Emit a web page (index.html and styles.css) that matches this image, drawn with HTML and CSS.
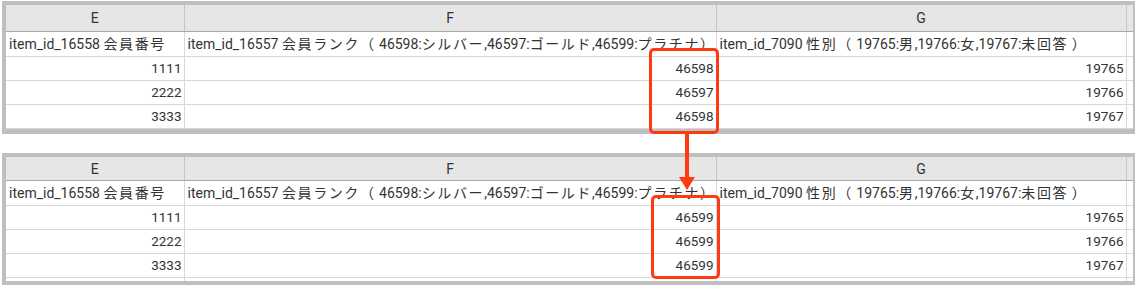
FILE: index.html
```html
<!DOCTYPE html>
<html lang="ja">
<head>
  <meta charset="UTF-8" />
  <title>会員ランク 一括更新</title>
  <link rel="stylesheet" href="styles.css">
</head>
<body>

  <div class="page">
    <!-- before -->
    <div class="sheet sheet-before">
      <table class="grid">
        <colgroup>
          <col class="col-e"><col class="col-f"><col class="col-g"><col>
        </colgroup>
        <thead>
          <tr><th>E</th><th>F</th><th>G</th><th class="edge"></th></tr>
        </thead>
        <tbody>
          <tr class="label-row">
            <td>item_id_16558 <span class="ja">会員番号</span></td>
            <td>item_id_16557 <span class="ja">会員ランク（</span> 46598:<span class="ja">シルバー</span>,46597:<span class="ja">ゴールド</span>,46599:<span class="ja">プラチナ）</span></td>
            <td>item_id_7090 <span class="ja">性別（</span> 19765:<span class="ja">男</span>,19766:<span class="ja">女</span>,19767:<span class="ja">未回答</span> <span class="ja">）</span></td>
            <td></td>
          </tr>
          <tr><td class="num">1111</td><td class="num">46598</td><td class="num">19765</td><td></td></tr>
          <tr><td class="num">2222</td><td class="num">46597</td><td class="num">19766</td><td></td></tr>
          <tr><td class="num">3333</td><td class="num">46598</td><td class="num">19767</td><td></td></tr>
        </tbody>
      </table>
    </div>

    <!-- after -->
    <div class="sheet sheet-after">
      <table class="grid">
        <colgroup>
          <col class="col-e"><col class="col-f"><col class="col-g"><col>
        </colgroup>
        <thead>
          <tr><th>E</th><th>F</th><th>G</th><th class="edge"></th></tr>
        </thead>
        <tbody>
          <tr class="label-row">
            <td>item_id_16558 <span class="ja">会員番号</span></td>
            <td>item_id_16557 <span class="ja">会員ランク（</span> 46598:<span class="ja">シルバー</span>,46597:<span class="ja">ゴールド</span>,46599:<span class="ja">プラチナ）</span></td>
            <td>item_id_7090 <span class="ja">性別（</span> 19765:<span class="ja">男</span>,19766:<span class="ja">女</span>,19767:<span class="ja">未回答</span> <span class="ja">）</span></td>
            <td></td>
          </tr>
          <tr><td class="num">1111</td><td class="num">46599</td><td class="num">19765</td><td></td></tr>
          <tr><td class="num">2222</td><td class="num">46599</td><td class="num">19766</td><td></td></tr>
          <tr><td class="num">3333</td><td class="num">46599</td><td class="num">19767</td><td></td></tr>
          <tr class="cut-row"><td></td><td></td><td></td><td></td></tr>
        </tbody>
      </table>
    </div>

    <!-- highlight boxes + arrow -->
    <div class="mark mark-before"></div>
    <div class="mark mark-after"></div>
    <svg class="arrow" width="20" height="60" viewBox="0 0 20 60">
      <rect x="8" y="0" width="4" height="46" fill="#fe3a12"/>
      <polygon points="2,45 18,45 10,58" fill="#fe3a12"/>
    </svg>
  </div>

</body>
</html>
```

FILE: styles.css
```css
body {
  margin: 0;
  background: #fff;
  font-family: Roboto, "Noto Sans CJK JP", sans-serif;
  color: #333;
}

.page {
  position: relative;
  width: 1135px;
  height: 285px;
  overflow: hidden;
}

.sheet {
  margin-left: 2px;
  width: 1127px;
  border: 4px solid #bfbfbf;
  background: #fff;
}

.sheet-before {
  margin-top: 1px;
  border-bottom-width: 5px;
}

.sheet-after {
  margin-top: 19px;
}

.grid {
  width: 100%;
  border-collapse: collapse;
  table-layout: fixed;
  font-size: 13.5px;
}

.col-e { width: 178px; }
.col-f { width: 532px; }
.col-g { width: 410px; }

.grid th {
  height: 26px;
  padding: 0;
  background: #e6e6e6;
  font-weight: normal;
  font-size: 14px;
  text-align: center;
  border-right: 1px solid #c6c6c6;
  border-bottom: 1px solid #a8a8a8;
}

.sheet-after .grid th {
  height: 23px;
}

.grid th.edge {
  border-right: none;
}

.grid td {
  height: 23px;
  padding: 0 2px 0 3px;
  white-space: nowrap;
  overflow: hidden;
  border-right: 1px solid #d8d8d8;
  border-bottom: 1px solid #d8d8d8;
  line-height: 23px;
}

.grid .label-row td {
  font-size: 14px;
}

/* kanji / kana: same size as latin, but spaced out */
.grid td .ja {
  font-family: "Noto Sans CJK JP", sans-serif;
  font-size: 14px;
  letter-spacing: 1.6px;
}

.grid td:last-child {
  border-right: none;
}

.grid td.num {
  text-align: right;
}

.grid .cut-row td {
  height: 3px;
  border-bottom: none;
}

.mark {
  position: absolute;
  border: 3px solid #fe3a12;
  border-radius: 5px;
  box-sizing: border-box;
}

.mark-before {
  left: 649px;
  top: 48px;
  width: 70px;
  height: 86px;
}

.mark-after {
  left: 651px;
  top: 195px;
  width: 69px;
  height: 84px;
}

.arrow {
  position: absolute;
  left: 677px;
  top: 132px;
}
```
